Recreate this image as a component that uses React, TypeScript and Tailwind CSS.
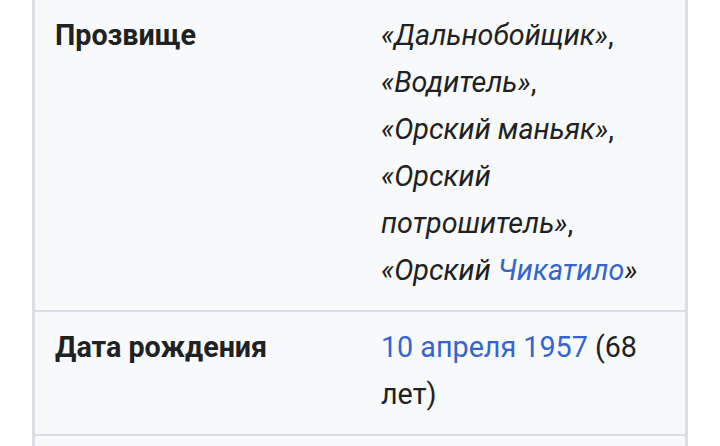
import { FC, ReactNode } from 'react'

const Row: FC<{ label: string; children: ReactNode }> = ({ label, children }) => {
    return (
        <div className="grid grid-cols-[346px_1fr] border-b-2 border-[#dadde3] pt-3 pb-4">
            <div className="pl-5 font-bold text-[#202122]">{label}</div>
            <div className="pr-5 text-[#202122]">{children}</div>
        </div>
    )
}

export default function App() {
    return (
        <div className="min-h-[446px] bg-white px-8 font-['Roboto',sans-serif] text-[28.7px] leading-[47px]">
            <div className="border-x-[3px] border-[#dadde3] bg-[#f8f9fa]">
                <Row label="Прозвище">
                    <i>«Дальнобойщик»</i>,<br />
                    <i>«Водитель»</i>,<br />
                    <i>«Орский маньяк»</i>,<br />
                    <i>«Орский потрошитель»</i>,<br />
                    <i>«Орский <a className="text-[#3366cc]">Чикатило</a>»</i>
                </Row>
                <Row label="Дата рождения">
                    <a className="text-[#3366cc]">10 апреля 1957</a> (68 лет)
                </Row>
                <div className="h-6" />
            </div>
        </div>
    )
}
